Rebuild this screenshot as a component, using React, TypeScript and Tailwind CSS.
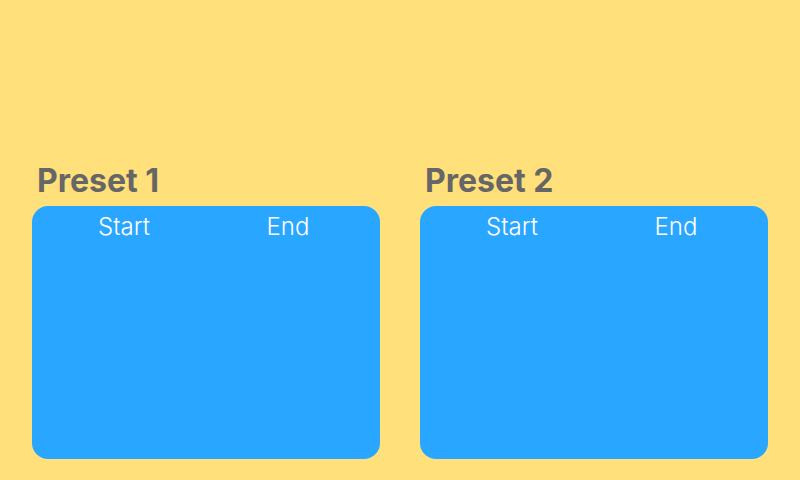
export default function App() {
  const presets = ['Preset 1', 'Preset 2'];

  return (
    <div className="w-[800px] h-[480px] bg-[#ffe07a] flex gap-10 px-8 pt-[163px] font-['Inter',sans-serif]">
      {presets.map((name) => (
        <div key={name} className="flex-1 flex flex-col">
          <h2 className="pl-[5px] mb-[7px] text-[32px] leading-[36px] font-bold text-[#666666]">{name}</h2>
          <div className="h-[253px] rounded-2xl bg-[#29a6ff] px-[10px] pt-[7px]">
            <div className="grid grid-cols-2 text-white text-[24px] leading-[28px] font-light text-center">
              <span>Start</span>
              <span>End</span>
            </div>
          </div>
        </div>
      ))}
    </div>
  );
}
